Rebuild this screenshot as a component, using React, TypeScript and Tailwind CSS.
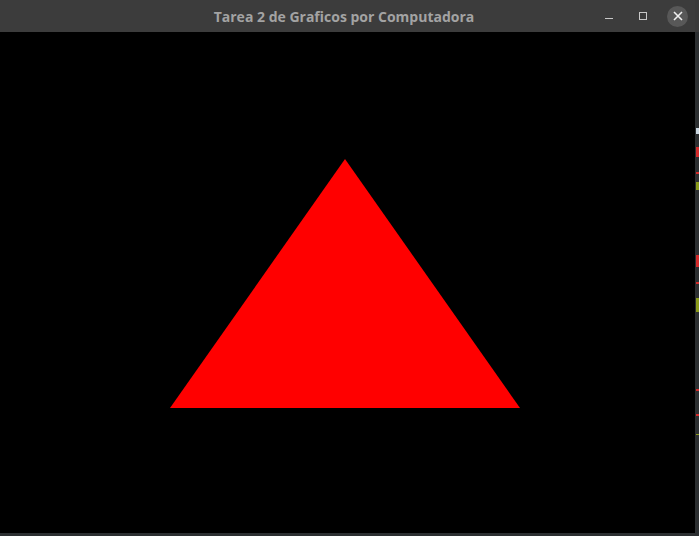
export default function App() {
  return (
    <div className="flex h-[536px] w-[699px] overflow-hidden bg-[#2c2f31]">
      {/* window */}
      <div className="flex h-[533px] w-[695px] flex-col">
        <div className="relative flex h-[32px] items-center justify-center bg-[#3c3c3c]">
          <span className="pr-[7px] text-[14px] font-bold text-[#a3a3a3] [font-family:'Open_Sans','DejaVu_Sans',sans-serif]">
            Tarea 2 de Graficos por Computadora
          </span>
          <div className="absolute right-[7px] top-0 flex h-[32px] items-center gap-[14px]">
            <div className="flex h-[20px] w-[20px] items-center justify-center">
              <div className="mt-[5px] h-[1px] w-[8px] bg-[#c8c8c8]" />
            </div>
            <div className="flex h-[20px] w-[20px] items-center justify-center">
              <div className="mb-[1px] h-[8px] w-[8px] border border-[#c8c8c8]" />
            </div>
            <div className="flex h-[21px] w-[21px] items-center justify-center rounded-full bg-[#585858]">
              <svg width="10" height="10" viewBox="0 0 10 10">
                <path d="M1 1 L9 9 M9 1 L1 9" stroke="#f0f0f0" strokeWidth="1.6" />
              </svg>
            </div>
          </div>
        </div>
        <div className="flex-1 bg-black">
          <svg width="695" height="501" viewBox="0 0 695 501" className="block">
            <polygon points="345,127 170,376 520,376" fill="#ff0000" />
          </svg>
        </div>
      </div>
      {/* background window edge */}
      <svg width="4" height="536" viewBox="0 0 4 536" className="block">
        <rect x="0" y="0" width="4" height="32" fill="#3a3a3a" />
        <rect x="1" y="128" width="3" height="6" fill="#c9d6e0" />
        <rect x="1" y="147" width="3" height="10" fill="#d22b2b" />
        <rect x="1" y="172" width="3" height="2" fill="#d22b2b" />
        <rect x="1" y="182" width="3" height="8" fill="#8a9a1a" />
        <rect x="1" y="255" width="3" height="12" fill="#d22b2b" />
        <rect x="1" y="282" width="3" height="2" fill="#d22b2b" />
        <rect x="1" y="298" width="3" height="14" fill="#8a9a1a" />
        <rect x="1" y="389" width="3" height="2" fill="#d22b2b" />
        <rect x="1" y="414" width="3" height="2" fill="#d22b2b" />
        <rect x="1" y="434" width="3" height="1" fill="#8a9a1a" />
      </svg>
    </div>
  );
}
